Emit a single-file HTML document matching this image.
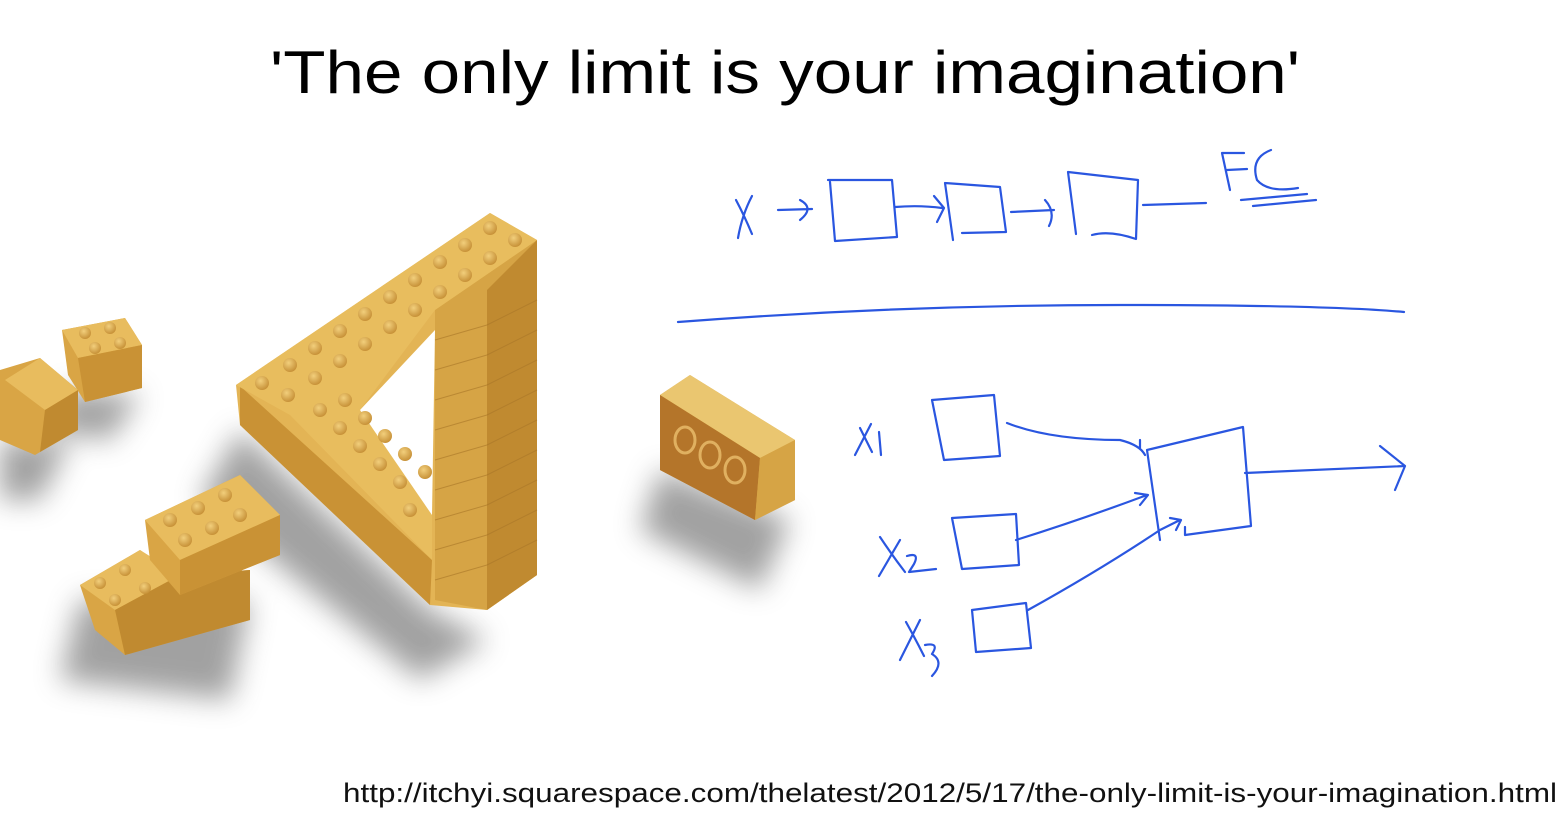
<!DOCTYPE html>
<html><head><meta charset="utf-8"><style>
html,body{margin:0;padding:0;background:#fff;width:1567px;height:815px;overflow:hidden}
svg{display:block}
</style></head><body>
<svg width="1567" height="815" viewBox="0 0 1567 815" xmlns="http://www.w3.org/2000/svg">
<defs>
<filter id="b" x="-50%" y="-50%" width="200%" height="200%"><feGaussianBlur stdDeviation="14"/></filter>
<radialGradient id="st" cx="40%" cy="35%" r="70%"><stop offset="0" stop-color="#f2cf7c"/><stop offset="1" stop-color="#c48d33"/></radialGradient>
</defs>
<text x="785" y="93" font-family="Liberation Sans, sans-serif" font-size="60" text-anchor="middle" textLength="1030" lengthAdjust="spacingAndGlyphs" fill="#000">'The only limit is your imagination'</text>

<g fill="#555" opacity="0.55" filter="url(#b)">
<polygon points="240,430 430,610 487,640 420,680 200,500"/>
<polygon points="80,600 250,600 230,700 60,680"/>
<polygon points="0,440 70,440 40,500 0,500"/>
<polygon points="660,470 790,520 760,590 640,530"/>
<polygon points="65,390 140,395 110,440 50,430"/>
</g>

<polygon points="236,385 490,213 537,240 537,575 487,610 430,605 240,425" fill="#e3b455"/>
<polygon points="240,386 240,425 430,605 432,560" fill="#c99235"/>
<polygon points="435,310 537,240 537,575 487,610 435,600" fill="#d6a445"/>
<polygon points="487,290 537,240 537,575 487,610" fill="#c08a30"/>
<polygon points="236,385 490,213 537,240 435,310 360,410 432,470 432,560 290,415" fill="#e8bd5e"/>
<polygon points="360,410 435,330 432,515" fill="#fff"/>
<g stroke="#a87628" stroke-width="1" opacity="0.6">
<line x1="435" y1="340" x2="487" y2="325"/><line x1="435" y1="370" x2="487" y2="355"/><line x1="435" y1="400" x2="487" y2="385"/><line x1="435" y1="430" x2="487" y2="415"/><line x1="435" y1="460" x2="487" y2="445"/><line x1="435" y1="490" x2="487" y2="475"/><line x1="435" y1="520" x2="487" y2="505"/><line x1="435" y1="550" x2="487" y2="535"/><line x1="435" y1="580" x2="487" y2="565"/>
<line x1="487" y1="325" x2="537" y2="300"/><line x1="487" y1="355" x2="537" y2="330"/><line x1="487" y1="385" x2="537" y2="360"/><line x1="487" y1="415" x2="537" y2="390"/><line x1="487" y1="445" x2="537" y2="420"/><line x1="487" y1="475" x2="537" y2="450"/><line x1="487" y1="505" x2="537" y2="480"/><line x1="487" y1="535" x2="537" y2="510"/><line x1="487" y1="565" x2="537" y2="540"/>
</g>
<g fill="url(#st)">
<circle cx="490" cy="228" r="7"/><circle cx="515" cy="240" r="7"/><circle cx="465" cy="245" r="7"/><circle cx="490" cy="258" r="7"/>
<circle cx="440" cy="262" r="7"/><circle cx="465" cy="275" r="7"/><circle cx="415" cy="280" r="7"/><circle cx="440" cy="292" r="7"/>
<circle cx="390" cy="297" r="7"/><circle cx="415" cy="310" r="7"/><circle cx="365" cy="314" r="7"/><circle cx="390" cy="327" r="7"/>
<circle cx="340" cy="331" r="7"/><circle cx="365" cy="344" r="7"/><circle cx="315" cy="348" r="7"/><circle cx="340" cy="361" r="7"/>
<circle cx="290" cy="365" r="7"/><circle cx="315" cy="378" r="7"/><circle cx="262" cy="383" r="7"/><circle cx="288" cy="395" r="7"/>
<circle cx="320" cy="410" r="7"/><circle cx="345" cy="400" r="7"/><circle cx="340" cy="428" r="7"/><circle cx="365" cy="418" r="7"/>
<circle cx="360" cy="446" r="7"/><circle cx="385" cy="436" r="7"/><circle cx="380" cy="464" r="7"/><circle cx="405" cy="454" r="7"/>
<circle cx="400" cy="482" r="7"/><circle cx="425" cy="472" r="7"/><circle cx="410" cy="510" r="7"/>
</g>

<polygon points="62,330 125,318 142,345 142,388 85,402 68,375" fill="#d9a545"/>
<polygon points="62,330 125,318 142,345 78,358" fill="#e8bc5e"/>
<polygon points="78,358 142,345 142,388 85,402" fill="#c99235"/>
<g fill="url(#st)"><circle cx="85" cy="333" r="6"/><circle cx="110" cy="328" r="6"/><circle cx="95" cy="348" r="6"/><circle cx="120" cy="343" r="6"/></g>
<polygon points="0,370 40,358 78,390 78,430 35,455 0,440" fill="#d9a545"/>
<polygon points="40,358 78,390 45,410 5,380" fill="#e8bc5e"/>
<polygon points="45,410 78,390 78,430 40,452" fill="#c08a30"/>

<polygon points="80,585 140,550 175,575 250,570 250,620 125,655 95,630" fill="#d9a545"/>
<polygon points="80,585 140,550 180,575 115,610" fill="#e8bc5e"/>
<polygon points="115,610 180,575 250,570 250,620 125,655" fill="#c08a30"/>
<polygon points="145,520 240,475 280,515 280,555 180,595 150,560" fill="#d9a545"/>
<polygon points="145,520 240,475 280,515 180,560" fill="#e8bc5e"/>
<polygon points="180,560 280,515 280,555 180,595" fill="#c99235"/>
<g fill="url(#st)"><circle cx="170" cy="520" r="7"/><circle cx="198" cy="508" r="7"/><circle cx="225" cy="495" r="7"/><circle cx="185" cy="540" r="7"/><circle cx="212" cy="528" r="7"/><circle cx="240" cy="515" r="7"/>
<circle cx="100" cy="583" r="6"/><circle cx="125" cy="570" r="6"/><circle cx="115" cy="600" r="6"/><circle cx="145" cy="588" r="6"/></g>

<polygon points="660,395 690,375 795,440 795,500 755,520 660,470" fill="#d9a545"/>
<polygon points="660,395 690,375 795,440 760,458" fill="#eac670"/>
<polygon points="660,395 760,458 755,520 660,470" fill="#b4752a"/>
<polygon points="760,458 795,440 795,500 755,520" fill="#d6a445"/>
<g fill="none" stroke="#e0b060" stroke-width="3"><ellipse cx="685" cy="440" rx="10" ry="13"/><ellipse cx="710" cy="455" rx="10" ry="13"/><ellipse cx="735" cy="470" rx="10" ry="13"/></g>

<g fill="none" stroke="#2a56e0" stroke-width="2.2" stroke-linecap="round" stroke-linejoin="round">
<path d="M736 200 Q744 215 752 234 M752 196 Q742 215 738 238"/>
<path d="M778 210 L812 209 M800 200 Q815 208 800 220"/>
<path d="M828 180 L892 180 L897 237 L835 241 L830 182"/>
<path d="M895 207 Q920 205 942 208 M934 196 L944 208 L937 222"/>
<path d="M945 183 L1000 187 L1006 232 L962 233 M945 183 L953 240"/>
<path d="M1011 212 L1054 210 M1045 200 Q1056 212 1049 226"/>
<path d="M1068 172 L1138 180 L1136 239 Q1110 230 1092 235 M1068 172 L1076 234"/>
<path d="M1143 205 L1206 203"/>
<path d="M1222 153 L1230 190 M1222 153 L1244 153 M1227 170 L1247 169"/>
<path d="M1271 150 Q1250 158 1257 180 Q1268 193 1298 188"/>
<path d="M1241 200 L1307 194 M1253 206 L1316 200"/>
<path d="M678 322 Q900 305 1120 305 Q1330 305 1404 312"/>
<path d="M860 428 Q866 440 872 452 M871 424 L855 455 M879 432 L881 455"/>
<path d="M932 400 L994 395 L1000 456 L944 460 L932 400"/>
<path d="M1007 423 Q1050 440 1120 440 Q1140 445 1145 455 M1140 440 L1140 448"/>
<path d="M1147 450 L1243 427 L1251 526 L1185 535 L1185 527 M1147 450 L1160 540"/>
<path d="M880 537 Q892 555 905 572 M900 540 L879 576 M907 556 Q920 552 914 564 L909 572 L936 569"/>
<path d="M952 518 L1016 514 L1019 565 L962 569 L952 518"/>
<path d="M1016 540 Q1080 520 1147 495 M1135 493 L1148 495 L1140 505"/>
<path d="M1245 473 Q1320 470 1405 466 M1380 446 L1405 466 L1395 490"/>
<path d="M906 622 Q916 640 924 656 M920 620 L900 660 M925 645 Q940 642 932 654 Q945 662 932 676"/>
<path d="M972 610 L1026 603 L1031 648 L976 652 L972 610"/>
<path d="M1028 610 Q1100 570 1160 530 L1180 520 M1170 518 L1181 520 L1176 530"/>
</g>

<text x="343" y="802" font-family="Liberation Sans, sans-serif" font-size="27" textLength="1214" lengthAdjust="spacingAndGlyphs" fill="#111">http://itchyi.squarespace.com/thelatest/2012/5/17/the-only-limit-is-your-imagination.html</text>
</svg>
</body></html>
